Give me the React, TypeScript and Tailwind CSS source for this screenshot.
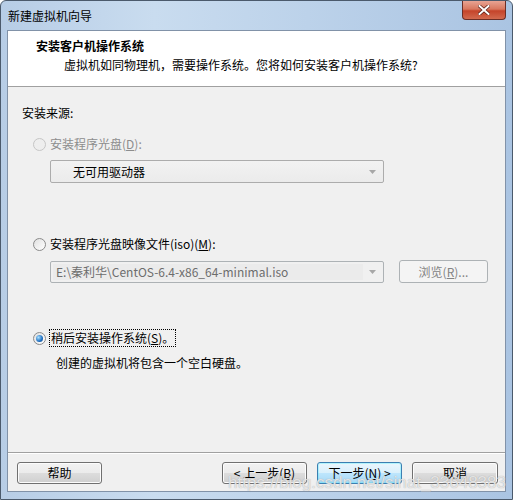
import React from "react";

const cjk = "font-['Noto_Sans_CJK_SC','Noto_Sans',sans-serif]";

function Radio({ checked, disabled }: { checked?: boolean; disabled?: boolean }) {
	return (
		<span
			className={`flex h-[13px] w-[13px] items-center justify-center rounded-full border ${
				disabled ? "border-[#c6c6c6] bg-[#eeeeee]" : "border-[#8a8a8a] bg-gradient-to-br from-[#e0e0e0] to-[#ffffff]"
			}`}
		>
			{checked && (
				<span className="h-[7px] w-[7px] rounded-full bg-[radial-gradient(circle_at_35%_35%,#a8e0ff,#1f6fc1_60%,#12447e)]" />
			)}
		</span>
	);
}

function Arrow({ light }: { light?: boolean }) {
	return (
		<svg width="7" height="4" viewBox="0 0 7 4">
			<path d="M0 0h7L3.5 4z" fill={light ? "#a7a7a7" : "#8a8a8a"} />
		</svg>
	);
}

function Button({ children, primary, className = "" }: { children: React.ReactNode; primary?: boolean; className?: string }) {
	return (
		<div
			className={`flex h-[22px] items-center justify-center rounded-[3px] border text-[12px] text-black ${
				primary
					? "border-[#3c7fb1] bg-[linear-gradient(#eaf6fd_0%,#d9f0fc_50%,#bee6fd_50%,#a7d9f5_100%)] shadow-[inset_0_0_0_1px_#48f0ff55]"
					: "border-[#707070] bg-[linear-gradient(#f2f2f2_0%,#ebebeb_50%,#dddddd_50%,#cfcfcf_100%)] shadow-[inset_0_0_0_1px_#fcfcfc]"
			} ${className}`}
		>
			{children}
		</div>
	);
}

export default function App() {
	return (
		<div className={`relative flex h-[500px] w-[513px] flex-col overflow-hidden rounded-t-[6px] border border-[#4b5a6c] bg-[linear-gradient(90deg,#b7cde6,#c9dcef_30%,#bcd2ea_60%,#aac4e2)] ${cjk}`}>
			{/* title bar */}
			<div className="flex h-[29px] shrink-0 items-start justify-between pl-[7px] pr-[6px]">
				<span className="mt-[7px] text-[12px] leading-[16px] text-black">新建虚拟机向导</span>
				<div className="flex h-[19px] w-[44px] items-center justify-center rounded-b-[4px] border border-t-0 border-[#6b2e26] bg-[linear-gradient(#e8a493_0%,#d8775f_45%,#c5442a_55%,#d26a4f_100%)]">
					<svg width="12" height="10" viewBox="0 0 12 10">
						<path d="M1.5 1l9 8M10.5 1l-9 8" stroke="#5a2118" strokeWidth="3.4" strokeLinecap="square" />
						<path d="M1.5 1l9 8M10.5 1l-9 8" stroke="#ffffff" strokeWidth="2" strokeLinecap="square" />
					</svg>
				</div>
			</div>

			{/* client area */}
			<div className="mx-[6px] flex flex-1 flex-col border border-[#8192a8] bg-[#f0f0f0]">
				<div className="flex h-[56px] shrink-0 flex-col border-b border-[#a0a0a0] bg-white">
					<span className="mt-[6px] pl-[28px] text-[12px] font-bold leading-[18px] text-black">安装客户机操作系统</span>
					<span className="mt-[1px] pl-[56px] text-[12px] leading-[18px] text-black">虚拟机如同物理机，需要操作系统。您将如何安装客户机操作系统?</span>
				</div>

				<div className="flex flex-1 flex-col pl-[14px] text-[12px] text-black">
					<span className="mt-[17px] leading-[18px]">安装来源:</span>

					<div className="ml-[11px] mt-[13px] flex items-center gap-[4px] text-[#8d8d8d]">
						<Radio disabled />
						<span className="leading-[18px]">
							安装程序光盘(<span className="underline">D</span>):
						</span>
					</div>
					<div className="ml-[28px] mt-[7px] flex h-[23px] w-[334px] items-center justify-between rounded-[2px] border border-[#acacac] bg-[linear-gradient(#f2f2f2,#ebebeb)] pl-[22px] pr-[7px]">
						<span>无可用驱动器</span>
						<Arrow light />
					</div>

					<div className="ml-[11px] mt-[52px] flex items-center gap-[4px]">
						<Radio />
						<span className="leading-[18px]">
							安装程序光盘映像文件(iso)(<span className="underline">M</span>):
						</span>
					</div>
					<div className="ml-[28px] mt-[7px] flex items-center gap-[15px]">
						<div className="flex h-[22px] w-[334px] items-center rounded-[2px] border border-[#adb2b5] bg-[#f0f0f0] p-[2px]">
							<span className="flex h-full w-[310px] items-center bg-[#ebebeb] pl-[3px] text-[#6d6d6d]">
								E:\秦利华\CentOS-6.4-x86_64-minimal.iso
							</span>
							<span className="flex flex-1 justify-center">
								<Arrow light />
							</span>
						</div>
						<div className="flex h-[23px] w-[89px] items-center justify-center rounded-[3px] border border-[#adb2b5] bg-[#f4f4f4] text-[#838383]">
							浏览(<span className="underline">R</span>)...
						</div>
					</div>

					<div className="ml-[11px] mt-[46px] flex items-center gap-[3px]">
						<Radio checked />
						<span className="border border-dotted border-black px-[1px] leading-[16px]">
							稍后安装操作系统(<span className="underline">S</span>)。
						</span>
					</div>
					<span className="ml-[34px] mt-[7px] leading-[18px]">创建的虚拟机将包含一个空白硬盘。</span>
				</div>

				<div className="h-px shrink-0 bg-[#a0a0a0] shadow-[0_1px_0_#ffffff]" />
				<div className="flex h-[38px] shrink-0 items-start pl-[9px] pt-[9px]">
					<Button className="w-[85px]">帮助</Button>
					<Button className="ml-[120px] w-[85px]">
						&lt; 上一步(<span className="underline">B</span>)
					</Button>
					<Button primary className="ml-[10px] w-[85px]">
						下一步(<span className="underline">N</span>) &gt;
					</Button>
					<Button className="ml-[10px] w-[86px]">取消</Button>
				</div>
			</div>
			<div className="h-[7px] shrink-0" />

			<span className="pointer-events-none absolute bottom-[7px] right-[6px] font-['Liberation_Sans',sans-serif] text-[17px] leading-[18px] text-white/70 [text-shadow:0_0_1px_#9a9a9a]">
				https://blog.csdn.net/sinat_33648383
			</span>
		</div>
	);
}
